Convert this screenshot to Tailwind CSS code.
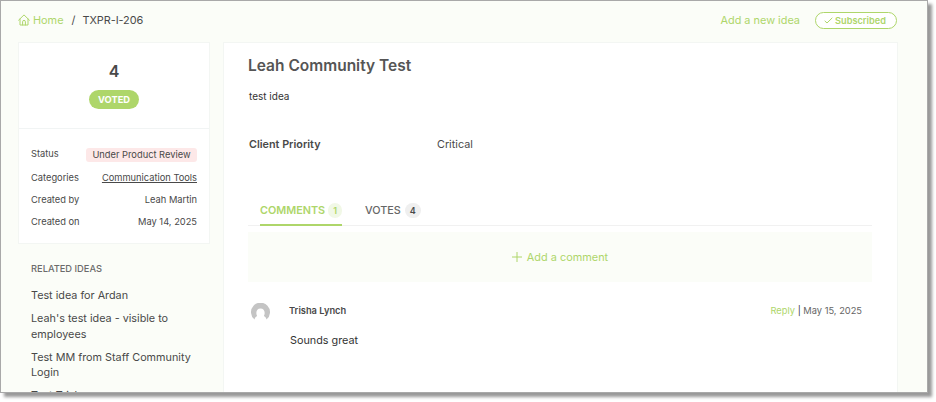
<!DOCTYPE html>
<html lang="en">
<head>
  <meta charset="UTF-8">
  <meta name="viewport" content="width=device-width, initial-scale=1.0">
  <title>Leah Community Test</title>
  <script src="https://cdn.jsdelivr.net/npm/@tailwindcss/browser@4"></script>
</head>
<body class="h-[402px] bg-white font-['Inter',sans-serif] text-[#494949] overflow-hidden">
  <div class="w-[928px] h-[393px] overflow-hidden border border-[#a9a9a9] bg-[#fbfdf8] shadow-[4px_4px_3px_0px_#999999]">

    <!-- Top bar -->
    <header class="flex items-center justify-between h-[41px] pl-[17px] pr-[30px] pb-[2px] text-[10.9px]">
      <nav class="flex items-center">
        <a href="#" class="flex items-center text-[#aed66a]">
          <svg class="w-3 h-3 mr-[3px]" viewBox="0 0 12 12" fill="none" stroke="currentColor" stroke-linecap="round" stroke-linejoin="round">
            <path d="M.6 6.2 6 .9l5.4 5.3M2 5v6h8V5M4.6 11V7.8a1.4 1.4 0 0 1 2.8 0V11" />
          </svg>
          Home
        </a>
        <span class="mx-2">/</span>
        <span class="-ml-px tracking-[-0.05px]">TXPR-I-206</span>
      </nav>
      <div class="flex items-center text-[#aed66a]">
        <a href="#" class="mr-[15px]">Add a new idea</a>
        <button class="flex items-center justify-center w-[82px] h-[17px] pr-[2px] rounded-full border border-[#aed66a] bg-white text-[9.2px] font-semibold">
          <svg class="w-[9px] h-[7px] mr-[2px]" viewBox="0 0 9 7" fill="none" stroke="currentColor">
            <path d="M.7 3.8 3 6 8.3.8" />
          </svg>
          Subscribed
        </button>
      </div>
    </header>

    <div class="flex gap-[13px] pl-[17px] pr-[30px]">
      <!-- Sidebar -->
      <aside class="w-[192px] shrink-0">
        <div class="h-[202px] border border-[#f3f6f3] bg-white">
          <div class="flex flex-col items-center h-[86px] pt-[16px] border-b border-[#f1f4f4]">
            <span class="text-base leading-6 font-semibold">4</span>
            <span class="mt-[7px] w-[50px] h-[19px] rounded-full bg-[#aed66a] text-center text-[9.3px] leading-[19px] font-bold text-white">VOTED</span>
          </div>
          <dl class="pl-3 pr-3 pt-[19px] text-[9.3px] leading-3">
            <div class="flex justify-between h-6">
              <dt>Status</dt>
              <dd class="w-[111px] h-[14px] rounded-[3px] bg-[#fde8e8] text-center leading-[14px]">Under Product Review</dd>
            </div>
            <div class="flex justify-between h-[22px]">
              <dt>Categories</dt>
              <dd><a href="#" class="underline">Communication Tools</a></dd>
            </div>
            <div class="flex justify-between h-[22px]">
              <dt>Created by</dt>
              <dd>Leah Martin</dd>
            </div>
            <div class="flex justify-between">
              <dt>Created on</dt>
              <dd>May 14, 2025</dd>
            </div>
          </dl>
        </div>

        <div class="pl-[13px] pt-[18px] whitespace-nowrap">
          <h3 class="text-[9.3px] leading-[14px] font-medium text-[#6b6b6b]">RELATED IDEAS</h3>
          <ul class="mt-3 space-y-[7.5px] text-[10.8px] leading-[15.5px]">
            <li>Test idea for Ardan</li>
            <li>Leah's test idea - visible to<br>employees</li>
            <li>Test MM from Staff Community<br>Login</li>
            <li>Test Trisha</li>
          </ul>
        </div>
      </aside>

      <!-- Idea -->
      <main class="w-[675px] h-[360px] shrink-0 border border-[#f3f6f3] bg-white pl-6 pr-[25px]">
        <h1 class="mt-[13px] text-[15.5px] leading-5 font-semibold text-[#555555]">Leah Community Test</h1>
        <p class="mt-[12px] pl-[1px] text-[10px] leading-4 text-[#333333]">test idea</p>
        <div class="mt-[33px] flex pl-[1px] text-[10.8px] leading-4">
          <span class="w-[188px] font-semibold">Client Priority</span>
          <span>Critical</span>
        </div>

        <div class="mt-[50px] flex gap-[23px] h-[23px] pl-[12px] border-b border-[#f1f1f1] text-[10.8px] leading-4 font-medium">
          <div class="flex h-[23px] border-b-2 border-[#aed66a] font-semibold text-[#aed66a]">
            COMMENTS
            <span class="ml-[3px] w-[14px] h-[15px] rounded-full bg-[#f1f8e6] text-center text-[9px] leading-[15px]">1</span>
          </div>
          <div class="flex text-[#666666]">
            VOTES
            <span class="ml-1 w-4 h-[15px] rounded-full bg-[#efefef] text-center text-[9px] leading-[15px] font-semibold text-[#494949]">4</span>
          </div>
        </div>

        <a href="#" class="mt-[6px] flex items-center justify-center h-[50px] bg-[#fbfdf8] text-[10.9px] text-[#aed66a]">
          <svg class="w-[10px] h-[10px] mr-[5px]" viewBox="0 0 10 10" fill="none" stroke="currentColor">
            <path d="M5 0v10M0 5h10" />
          </svg>
          Add a comment
        </a>

        <div class="mt-[21px] flex pl-[3px] pr-[10px]">
          <svg class="w-[19px] h-[19px] mr-[19px]" viewBox="0 0 19 19">
            <path fill="#c4c4c4" d="M3.6 16.6A9.5 9.5 0 1 1 15.4 16.6c-.1-1.6-.9-3-2.5-3.7C14.7 9.5 13.3 5.6 9.5 5.6S4.3 9.5 6.1 12.9C4.500 13.600 3.700 15 3.600 16.600Z" />
          </svg>
          <div class="flex-1">
            <div class="flex justify-between text-[9.3px] leading-4">
              <span class="font-semibold">Trisha Lynch</span>
              <span class="text-[#666666]"><a href="#" class="text-[#aed66a]">Reply</a> <span class="text-[#333333]">|</span> May 15, 2025</span>
            </div>
            <p class="mt-[14px] pl-[1px] text-[10.8px] leading-4 text-[#333333]">Sounds great</p>
          </div>
        </div>
      </main>
    </div>
  </div>
</body>
</html>
